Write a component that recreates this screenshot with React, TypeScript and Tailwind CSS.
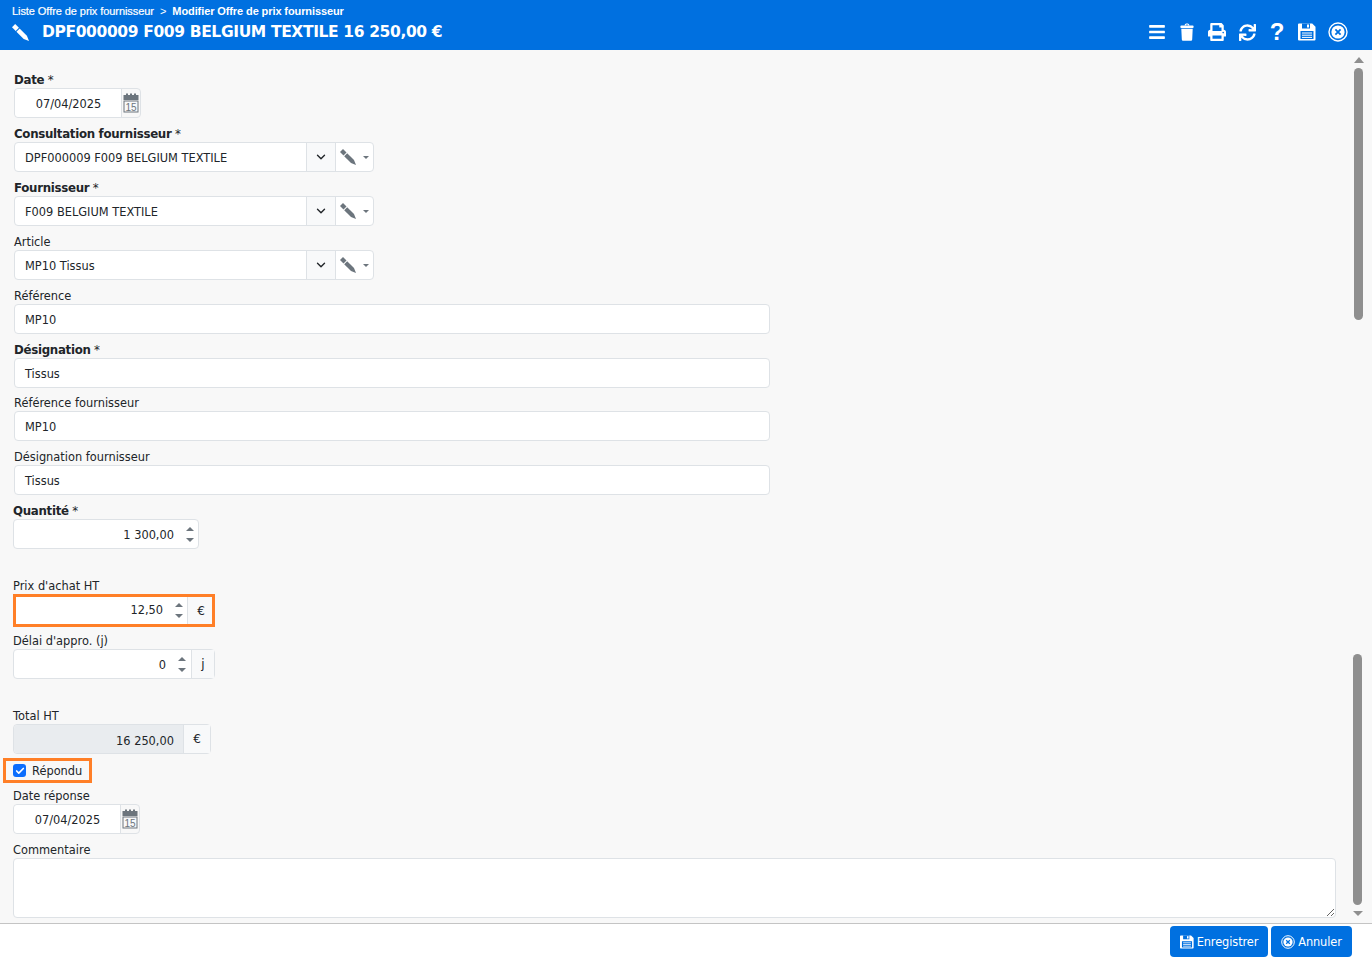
import { Check, ChevronDown } from "lucide-react"
import { FaBars, FaPrint, FaSync } from "react-icons/fa"
import { ReactNode } from "react"

const FONT = "font-['Tahoma','DejaVu_Sans',sans-serif]"

function Label({ text, bold, className = "" }: { text: string; bold?: boolean; className?: string }) {
  return (
    <label className={`block h-[17px] leading-[19px] text-[#212529] ${bold ? "text-[11.8px] font-bold tracking-[-0.3px]" : "text-[11.4px]"} ${className}`}>
      {text}{bold ? <span className="font-normal"> *</span> : null}
    </label>
  )
}

function Pencil({ size = 16, color = "#6c757d" }: { size?: number; color?: string }) {
  return (
    <svg width={size} height={size} viewBox="0 0 16 16" fill={color}>
      <path d="M3 0 6.500 3.500 3.500 6.500 0 3Z" />
      <path d="M7.200 4.200 14 11 16 16 11 14 4.200 7.200Z" />
    </svg>
  )
}

function TrashIcon() {
  return (
    <svg width="14" height="18" viewBox="0 0 14 18" fill="white">
      <path d="M4.600 2.400C4.800.9 5.600.4 7 .4s2.200.5 2.400 2H8.200C8.100 1.700 7.700 1.500 7 1.500s-1.100.2-1.200.9Z" />
      <rect x="0.400" y="2.400" width="13.200" height="2.600" rx="1" />
      <path d="M1.300 5.800h11.400l-.5 10.400c0 1-.7 1.600-1.600 1.600H3.400c-.9 0-1.600-.6-1.600-1.600Z" />
    </svg>
  )
}

function SaveIcon({ size = 18, slot = "#0070e0" }: { size?: number; slot?: string }) {
  return (
    <svg width={size} height={size} viewBox="0 0 18 18">
      <path d="M1 .5h13.200L17.500 3.800V16.500a1 1 0 0 1-1 1H1a1 1 0 0 1-1-1V1.500a1 1 0 0 1 1-1Z" fill="white" />
      <rect x="4" y="0.500" width="8" height="5" fill={slot} />
      <rect x="9" y="1.500" width="2" height="3" fill="white" />
      <rect x="2.500" y="8" width="13" height="8" fill={slot} />
      <path d="M4 10h10M4 12.200h10M4 14.400h10" stroke="white" strokeWidth="1" />
    </svg>
  )
}

function CloseCircle({ size = 20, stroke = "white" }: { size?: number; stroke?: string }) {
  return (
    <svg width={size} height={size} viewBox="0 0 20 20" fill="none">
      <circle cx="10" cy="10" r="9" stroke={stroke} strokeWidth="1.400" />
      <circle cx="10" cy="10" r="6.600" fill={stroke} />
      <path d="M7.400 7.400l5.200 5.200M12.600 7.400l-5.200 5.200" stroke="#0070e0" strokeWidth="1.800" />
    </svg>
  )
}

function CalendarIcon() {
  return (
    <svg width="16" height="20" viewBox="0 0 16 20" fill="none">
      <rect x="0.500" y="2" width="15" height="5" fill="#6c757d" />
      <rect x="3" y="0.500" width="2" height="3" fill="#6c757d" />
      <rect x="7" y="0.500" width="2" height="3" fill="#6c757d" />
      <rect x="11" y="0.500" width="2" height="3" fill="#6c757d" />
      <rect x="1" y="8" width="14" height="11" stroke="#6c757d" fill="#f8f9fa" />
      <text x="8" y="17.500" textAnchor="middle" fontSize="10" fill="#6c757d" fontFamily="Liberation Sans">15</text>
    </svg>
  )
}

function DateField({ value }: { value: string }) {
  return (
    <div className="flex h-[30px] w-[127px] rounded border border-[#dee2e6]">
      <div className="w-[106px] rounded-l bg-white pl-[1px] text-center text-[11.4px] leading-[30px] text-[#212529]">{value}</div>
      <div className="flex flex-1 items-center justify-center border-l border-[#dee2e6]">
        <CalendarIcon />
      </div>
    </div>
  )
}

function SelectField({ value }: { value: string }) {
  return (
    <div className="flex h-[30px] w-[360px] rounded border border-[#dee2e6] bg-white">
      <div className="flex-1 pl-[10px] text-[11.4px] leading-[30px] text-[#212529]">{value}</div>
      <div className="flex w-[30px] items-center justify-center border-x border-[#dee2e6] bg-[#f8f9fa]">
        <ChevronDown size={14} strokeWidth={2.400} color="#212529" />
      </div>
      <div className="flex w-[37px] items-center gap-[7px] pl-[4px]">
        <Pencil />
        <span className="h-0 w-0 border-x-[3px] border-t-[3px] border-x-transparent border-t-[#6c757d]" />
      </div>
    </div>
  )
}

function TextField({ value }: { value: string }) {
  return (
    <div className="h-[30px] w-[756px] rounded border border-[#dee2e6] bg-white pl-[10px] text-[11.4px] leading-[30px] text-[#212529]">
      {value}
    </div>
  )
}

function Spinner() {
  return (
    <div className="flex flex-col gap-[7px]">
      <span className="h-0 w-0 border-x-[4px] border-b-[4px] border-x-transparent border-b-[#6c757d]" />
      <span className="h-0 w-0 border-x-[4px] border-t-[4px] border-x-transparent border-t-[#6c757d]" />
    </div>
  )
}

function NumberField({ value, unit, width, spacing }: { value: string; unit?: string; width: string; spacing: string }) {
  return (
    <div className={`flex h-[30px] rounded border border-[#dee2e6] bg-white ${width}`}>
      <div className={`flex flex-1 items-center justify-end ${spacing}`}>
        <span className="pt-[3px] text-[11.4px] text-[#212529]">{value}</span>
        <Spinner />
      </div>
      {unit ? (
        <div className="flex w-[23px] items-center justify-center border-l border-[#dee2e6] bg-[#f8f9fa] text-[12px] text-[#212529]">{unit}</div>
      ) : null}
    </div>
  )
}

function Thumb({ className }: { className: string }) {
  return <div className={`w-[9px] rounded-full bg-[#8f8f8f] ${className}`} />
}

function HeaderIcon({ children }: { children: ReactNode }) {
  return <span className="flex w-[30px] items-center justify-center">{children}</span>
}

export default function App() {
  return (
    <div className={`flex h-[962px] w-[1372px] flex-col overflow-hidden bg-[#f8f8f8] ${FONT}`}>
      <header className="flex h-[50px] shrink-0 items-start justify-between bg-[#0070e0] pl-[12px] pr-[20px] text-white">
        <div>
          <div className="mt-[5px] flex h-[13px] items-center font-['Liberation_Sans',sans-serif] text-[11px] leading-[13px]">
            <span className="tracking-[-0.07px] [-webkit-text-stroke:0.2px_white]">Liste Offre de prix fournisseur</span>
            <span className="mx-[6px]">&gt;</span>
            <span className="font-bold tracking-[-0.1px]">Modifier Offre de prix fournisseur</span>
          </div>
          <div className="mt-[3px] flex h-[23px] items-center">
            <Pencil size={17} color="white" />
            <span className="ml-[13px] text-[15.5px] font-bold tracking-[-0.37px]">DPF000009 F009 BELGIUM TEXTILE 16 250,00 €</span>
          </div>
        </div>
        <div className="mt-[22px] flex h-[20px] items-center">
          <HeaderIcon><FaBars size={18} /></HeaderIcon>
          <HeaderIcon><TrashIcon /></HeaderIcon>
          <HeaderIcon><FaPrint size={18} /></HeaderIcon>
          <HeaderIcon><FaSync size={17} /></HeaderIcon>
          <HeaderIcon><span className="font-['Liberation_Sans',sans-serif] text-[24px] leading-[20px] font-bold">?</span></HeaderIcon>
          <HeaderIcon><SaveIcon /></HeaderIcon>
          <HeaderIcon><span className="ml-[2px]"><CloseCircle /></span></HeaderIcon>
        </div>
      </header>

      <div className="flex min-h-0 flex-1">
        <main className="min-w-0 flex-1 pt-[21px] pr-[16px]">
          <div className="pl-[14px]">
            <Label text="Date" bold />
            <DateField value="07/04/2025" />
            <Label text="Consultation fournisseur" bold className="mt-[7px]" />
            <SelectField value="DPF000009 F009 BELGIUM TEXTILE" />
            <Label text="Fournisseur" bold className="mt-[7px]" />
            <SelectField value="F009 BELGIUM TEXTILE" />
            <Label text="Article" className="mt-[7px]" />
            <SelectField value="MP10 Tissus" />
            <Label text="Référence" className="mt-[7px]" />
            <TextField value="MP10" />
            <Label text="Désignation" bold className="mt-[7px]" />
            <TextField value="Tissus" />
            <Label text="Référence fournisseur" className="mt-[6px]" />
            <TextField value="MP10" />
            <Label text="Désignation fournisseur" className="mt-[7px]" />
            <TextField value="Tissus" />
          </div>
          <div className="pl-[13px]">
            <Label text="Quantité" bold className="mt-[7px]" />
            <NumberField value="1 300,00" width="w-[186px]" spacing="gap-[12px] pr-[4px]" />
            <Label text="Prix d'achat HT" className="mt-[28px]" />
            <div className="flex h-[33px] w-[202px] border-[3px] border-[#ff7f27] bg-white">
              <div className="flex flex-1 items-center justify-end gap-[12px] pr-[4px]">
                <span className="pt-[1px] text-[11.4px] text-[#212529]">12,50</span>
                <Spinner />
              </div>
              <div className="flex w-[25px] items-center justify-center border-l border-[#dee2e6] bg-[#f8f9fa] pl-[2px] text-[12px] text-[#212529]">€</div>
            </div>
            <Label text="Délai d'appro. (j)" className="mt-[5px]" />
            <NumberField value="0" unit="j" width="w-[202px]" spacing="gap-[12px] pr-[5px]" />
            <Label text="Total HT" className="mt-[28px]" />
            <div className="flex h-[30px] w-[198px] rounded border border-[#dee2e6]">
              <div className="flex-1 rounded-l bg-[#e9ecef] pr-[9px] text-right text-[11.4px] leading-[32px] text-[#212529]">16 250,00</div>
              <div className="flex w-[27px] items-center justify-center border-l border-[#dee2e6] bg-[#f8f9fa] text-[12px] text-[#212529]">€</div>
            </div>
            <div className="-ml-[10px] mt-[4px] flex h-[25px] w-[89px] items-center gap-[6px] border-[3px] border-[#ff7f27] pl-[7px]">
              <span className="flex h-[13px] w-[13px] items-center justify-center rounded-[3px] bg-[#0d6efd]">
                <Check size={10} strokeWidth={4} color="white" />
              </span>
              <span className="pt-[3px] text-[11.4px] text-[#212529]">Répondu</span>
            </div>
            <Label text="Date réponse" className="mt-[4px]" />
            <DateField value="07/04/2025" />
            <Label text="Commentaire" className="mt-[7px]" />
            <textarea readOnly className="block h-[60px] w-[1323px] rounded border border-[#dee2e6] bg-white" />
          </div>
        </main>
        <aside className="flex w-[22px] shrink-0 flex-col items-start pl-[3px]">
          <span className="ml-[1px] mt-[7px] h-0 w-0 border-x-[5px] border-b-[6px] border-x-transparent border-b-[#8f8f8f]" />
          <Thumb className="ml-[1px] mt-[5px] h-[252px]" />
          <Thumb className="mt-[334px] h-[251px]" />
          <span className="mt-[6px] h-0 w-0 border-x-[5px] border-t-[5px] border-x-transparent border-t-[#8f8f8f]" />
        </aside>
      </div>

      <footer className="flex h-[39px] shrink-0 items-start justify-end gap-[3px] border-t border-[#c4c4c4] bg-white pt-[2px] pr-[20px]">
        <button className="flex h-[31px] w-[98px] items-center justify-center gap-[3px] rounded bg-[#0070e0] text-[11.4px] text-white">
          <SaveIcon size={14} /> <span className="pt-[3px] tracking-[-0.1px]">Enregistrer</span>
        </button>
        <button className="flex h-[31px] w-[81px] items-center justify-center gap-[3px] rounded bg-[#0070e0] text-[11.4px] text-white">
          <CloseCircle size={14} /> <span className="pt-[3px] tracking-[-0.1px]">Annuler</span>
        </button>
      </footer>
    </div>
  )
}
